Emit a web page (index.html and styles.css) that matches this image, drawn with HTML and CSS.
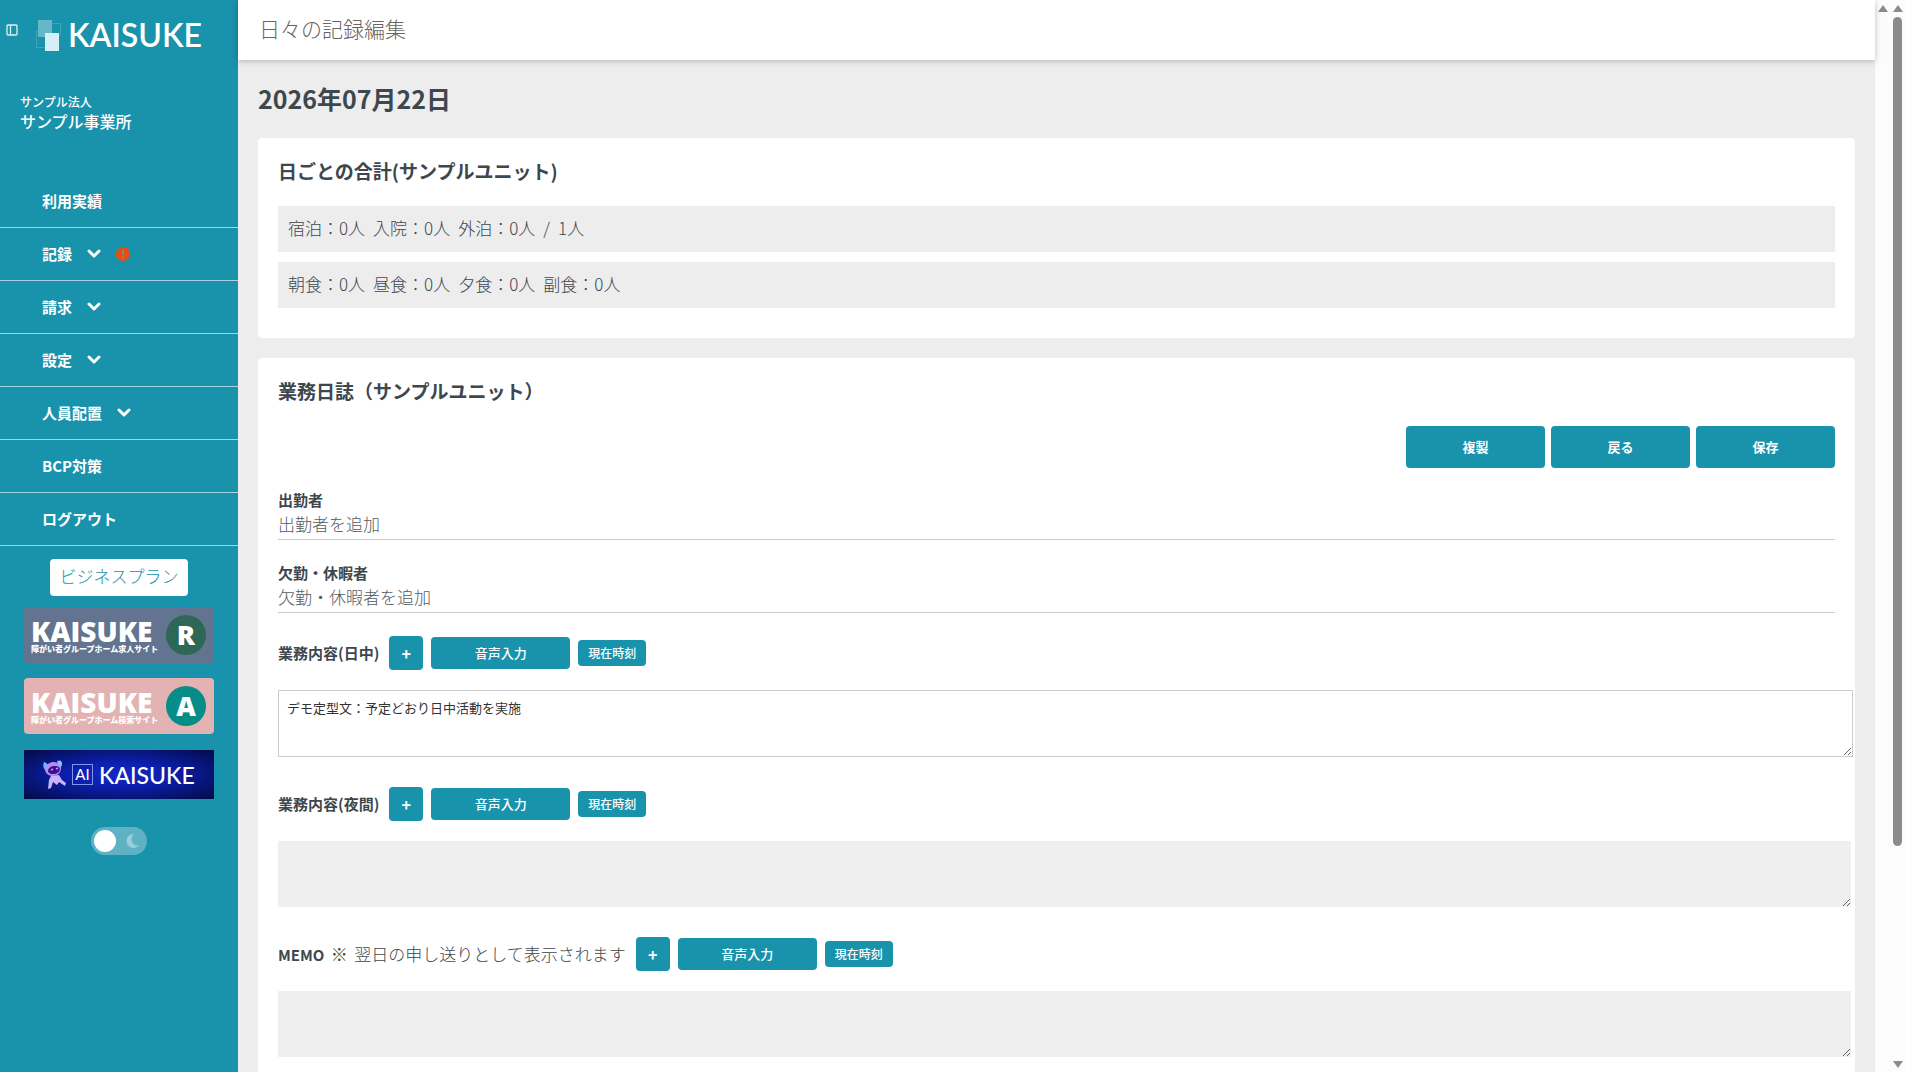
FILE: index.html
```
<!DOCTYPE html>
<html lang="ja">

<head>
<title>日々の記録編集</title>
<meta charset="utf-8">
<meta name="viewport" content="width=device-width, initial-scale=1">
<link rel="stylesheet" href="styles.css">
</head>

<body>
<div class="app">
	<aside class="sidebar">
		<div class="brand">
			<button class="collapse" type="button" aria-label="メニュー">
				<svg width="12" height="12" viewBox="0 0 12 12" fill="none" stroke="#d9f3f7" stroke-width="1.300"><rect x="1" y="1" width="10" height="10" rx="1"/><path d="M4.500 1v10"/></svg>
			</button>
			<svg class="brand-mark" width="26" height="32" viewBox="0 0 26 32">
				<rect x="14.500" y="3.500" width="10" height="12" fill="none" stroke="#3aa5bb"/>
				<rect x=".5" y="11.500" width="10" height="16" fill="none" stroke="#3aa5bb"/>
				<rect x="2" y="0" width="14" height="17" fill="#66b7c8"/>
				<rect x="9" y="13" width="14" height="18" fill="#d6eef6"/>
			</svg>
			<span class="brand-name">KAISUKE</span>
		</div>
		<div class="office">
			<p class="office-corp">サンプル法人</p>
			<p class="office-name">サンプル事業所</p>
		</div>
		<nav class="menu">
			<a href="#">利用実績</a>
			<a href="#">記録
				<svg class="chevron" width="14" height="10" viewBox="0 0 14 10"><path d="M2 2l5 5 5-5"/></svg>
				<svg class="alert" width="16" height="16" viewBox="0 0 16 16"><circle cx="8" cy="8" r="7" fill="#ea4c12"/><path d="M8 4v5M8 10.500v2" stroke="#8a8a72" stroke-width="2"/></svg>
			</a>
			<a href="#">請求
				<svg class="chevron" width="14" height="10" viewBox="0 0 14 10"><path d="M2 2l5 5 5-5"/></svg>
			</a>
			<a href="#">設定
				<svg class="chevron" width="14" height="10" viewBox="0 0 14 10"><path d="M2 2l5 5 5-5"/></svg>
			</a>
			<a href="#">人員配置
				<svg class="chevron" width="14" height="10" viewBox="0 0 14 10"><path d="M2 2l5 5 5-5"/></svg>
			</a>
			<a href="#">BCP対策</a>
			<a href="#">ログアウト</a>
		</nav>
		<div class="side-foot">
			<button class="plan" type="button">ビジネスプラン</button>
			<a class="banner banner-r" href="#">
				<span class="banner-text"><b>KAISUKE</b><small>障がい者グループホーム求人サイト</small></span>
				<span class="banner-badge">R</span>
			</a>
			<a class="banner banner-a" href="#">
				<span class="banner-text"><b>KAISUKE</b><small>障がい者グループホーム検索サイト</small></span>
				<span class="banner-badge">A</span>
			</a>
			<a class="banner-ai" href="#">
				<svg width="26" height="30" viewBox="0 0 26 30">
					<path d="M2 2Q6 3 7 8L3 10Q0 6 2 2z" fill="#62b8ff"/>
					<path d="M15 1Q20-1 20 4Q20 7 17 8z" fill="#7fc6ff"/>
					<ellipse cx="11" cy="9" rx="8" ry="7" fill="#b98cf0" transform="rotate(-12 11 9)"/>
					<ellipse cx="12" cy="10" rx="6" ry="4" fill="#35128f" transform="rotate(-12 12 10)"/>
					<path d="M9 10l2-1M14 9l2-1" stroke="#e875ff" stroke-width="1.500"/>
					<path d="M9 16L17 15L20 20L24 23L23 26L17 22L15 25L11 22L9 28L6 29L7 20z" fill="#c9b2ff"/>
				</svg>
				<span class="ai-box">AI</span>
				<span class="ai-name">KAISUKE</span>
			</a>
			<label class="theme">
				<input type="checkbox" aria-label="ダークモード">
				<svg width="14" height="16" viewBox="0 0 14 16"><path d="M8 1A7 7 0 1 0 13 12.500A6.500 6.500 0 0 1 8 1z" fill="#9ccfdb"/></svg>
			</label>
		</div>
	</aside>

	<div class="main">
		<header class="topbar">日々の記録編集</header>
		<main class="content">
			<h1>2026年07月22日</h1>

			<section class="card totals">
				<h2>日ごとの合計(サンプルユニット)</h2>
				<p><span>宿泊：0人</span> <span>入院：0人</span> <span>外泊：0人</span> <span>/</span> <span>1人</span></p>
				<p><span>朝食：0人</span> <span>昼食：0人</span> <span>夕食：0人</span> <span>副食：0人</span></p>
			</section>

			<section class="card diary">
				<h2>業務日誌（サンプルユニット）</h2>
				<div class="actions">
					<button class="btn" type="button">複製</button>
					<button class="btn" type="button">戻る</button>
					<button class="btn" type="button">保存</button>
				</div>

				<div class="field">
					<label for="present">出勤者</label>
					<input id="present" type="text" placeholder="出勤者を追加">
				</div>
				<div class="field">
					<label for="absent">欠勤・休暇者</label>
					<input id="absent" type="text" placeholder="欠勤・休暇者を追加">
				</div>

				<div class="entry">
					<div class="entry-head">
						<label for="day">業務内容(日中)</label>
						<button class="btn btn-add" type="button">+</button>
						<button class="btn btn-voice" type="button">音声入力</button>
						<button class="btn btn-time" type="button">現在時刻</button>
					</div>
					<textarea id="day" class="filled">デモ定型文：予定どおり日中活動を実施</textarea>
				</div>
				<div class="entry">
					<div class="entry-head">
						<label for="night">業務内容(夜間)</label>
						<button class="btn btn-add" type="button">+</button>
						<button class="btn btn-voice" type="button">音声入力</button>
						<button class="btn btn-time" type="button">現在時刻</button>
					</div>
					<textarea id="night"></textarea>
				</div>
				<div class="entry">
					<div class="entry-head">
						<label for="memo">MEMO <span>※</span> <span>翌日の申し送りとして表示されます</span></label>
						<button class="btn btn-add" type="button">+</button>
						<button class="btn btn-voice" type="button">音声入力</button>
						<button class="btn btn-time" type="button">現在時刻</button>
					</div>
					<textarea id="memo"></textarea>
				</div>
			</section>
		</main>
	</div>

	<div class="scroll">
		<i class="arrow-up"></i>
	</div>
	<div class="scroll">
		<i class="arrow-up"></i>
		<i class="thumb"></i>
		<i class="arrow-down"></i>
	</div>
</div>
</body>

</html>
```

FILE: styles.css
```
*,:after,:before{box-sizing:border-box}
body{
	margin:0;
	color:#3d474d;
	background:#fff;
	font:300 17px/24px 'Noto Sans CJK JP',sans-serif;
}
h1,h2,p{margin:0}
a{color:inherit;text-decoration:none}
button,input,textarea{font-family:inherit}
button{cursor:pointer}

.app{
	display:flex;
	height:100vh;
	padding:0 15px 8px 0;
	overflow:hidden;
}

/* sidebar */
.sidebar{
	flex:none;
	width:238px;
	color:#fff;
	background:#1992ac;
}
.brand{
	display:flex;
	height:90px;
	padding:20px 0 0 6px;
}
.collapse{
	width:12px;
	height:20px;
	margin-right:18px;
	padding:0;
	border:0;
	background:none;
}
.brand-name{
	margin-left:6px;
	font:600 32px/30px Lato,sans-serif;
}
.office{
	height:85px;
	padding-left:20px;
	font-weight:500;
}
.office-corp{
	font-size:12px;
}
.office-name{
	font-size:16px;
	line-height:14px;
}
.menu a{
	display:flex;
	align-items:center;
	height:53px;
	padding-left:42px;
	border-bottom:1px solid #a3d3de;
	font-size:15px;
	font-weight:700;
}
.chevron{
	margin-left:15px;
	fill:none;
	stroke:#fff;
	stroke-width:3;
	stroke-linecap:round;
	stroke-linejoin:round;
}
.alert{
	margin-left:14px;
}
.side-foot{
	display:flex;
	flex-direction:column;
	align-items:center;
	padding-top:13px;
}
.plan{
	width:138px;
	height:37px;
	padding:0 0 4px;
	border:0;
	border-radius:4px;
	color:#1992ac;
	background:#fff;
	font-size:17px;
	font-weight:300;
}
.banner{
	display:flex;
	align-items:center;
	justify-content:space-between;
	width:190px;
	height:56px;
	margin-top:11px;
	padding:0 8px 0 7px;
	border-radius:4px;
}
.banner-r{background:#62748f}
.banner-a{background:#e3b3b4;margin-top:15px}
.banner-text b{
	display:block;
	font:800 28px/28px 'Open Sans',sans-serif;
}
.banner-text small{
	display:block;
	font-size:8px;
	font-weight:900;
	line-height:8px;
}
.banner-badge{
	width:40px;
	height:40px;
	border-radius:50%;
	background:#2f6757;
	font:800 27px/40px 'Open Sans',sans-serif;
	text-align:center;
}
.banner-a .banner-badge{background:#078d88}
.banner-ai{
	display:flex;
	align-items:center;
	width:190px;
	height:49px;
	margin-top:16px;
	padding-left:18px;
	background:radial-gradient(ellipse at center,#1429c8 0,#0b1ea8 40%,#030b45 100%);
}
.ai-box{
	width:21px;
	height:21px;
	margin:0 6px 0 4px;
	border:1px solid #8296e8;
	font:400 15px/19px Lato,sans-serif;
	text-align:center;
}
.ai-name{
	font:500 23px/24px Lato,sans-serif;
}
.theme{
	display:flex;
	align-items:center;
	gap:10px;
	width:56px;
	height:28px;
	margin-top:28px;
	padding-left:3px;
	border-radius:14px;
	background:#5fb2c4;
}
.theme input{
	appearance:none;
	width:22px;
	height:22px;
	margin:0;
	border-radius:50%;
	background:#fff;
}

/* main */
.main{
	display:flex;
	flex:1;
	flex-direction:column;
	min-width:0;
	background:#ededed;
}
.topbar{
	position:relative;
	flex:none;
	height:60px;
	padding-left:21px;
	background:#fff;
	box-shadow:0 1px 6px rgba(0,0,0,.25);
	color:#666;
	font-size:21px;
	line-height:56px;
}
.content{
	padding:20px;
}
h1{
	font-size:25px;
	font-weight:700;
	line-height:36px;
}
.card{
	margin-top:20px;
	padding:20px;
	border-radius:4px;
	background:#fff;
}
h1 + .card{
	margin-top:22px;
}
h2{
	font-size:19px;
	font-weight:700;
	line-height:26px;
}
.totals{
	height:200px;
}
.totals p{
	display:flex;
	gap:8px;
	height:46px;
	margin-top:10px;
	padding:0 10px;
	background:#ededed;
	line-height:43px;
}
.totals h2 + p{
	margin-top:22px;
}
.actions{
	display:flex;
	justify-content:flex-end;
	gap:6px;
	margin:22px 0 20px;
}
.btn{
	width:139px;
	height:42px;
	padding:0 0 1px;
	border:0;
	border-radius:4px;
	color:#fff;
	background:#1992ac;
	font-size:13px;
	font-weight:700;
}
.field{
	margin-bottom:21px;
}
.field label{
	display:block;
	font-size:15px;
	font-weight:700;
	line-height:24px;
}
.field input{
	display:block;
	width:100%;
	height:28px;
	padding:0 0 4px;
	border:0;
	border-bottom:1px solid #c9c9c9;
	background:none;
	font-size:17px;
	font-weight:300;
	outline:0;
}
.field input::placeholder{
	color:#555d62;
}
.entry{
	margin-bottom:30px;
}
.entry-head{
	display:flex;
	align-items:center;
	gap:8px;
	height:34px;
	margin:0 0 20px;
}
.field + .entry{
	padding-top:2px;
}
.entry-head label{
	margin-right:2px;
	font-size:15px;
	font-weight:700;
}
.entry-head label span{
	margin-left:3px;
	font-size:17px;
	font-weight:300;
}
.btn-add{
	width:34px;
	height:34px;
	font-size:16px;
}
.btn-voice{
	height:32px;
	font-weight:500;
}
.btn-time{
	width:68px;
	height:26px;
	font-size:12px;
	font-weight:500;
}
.entry textarea{
	display:block;
	width:calc(100% + 16px);
	height:66px;
	padding:7px 8px;
	border:0;
	background:#efefef;
	color:#333;
	font-size:13px;
	font-weight:400;
	line-height:20px;
}
.entry textarea.filled{
	width:calc(100% + 18px);
	height:67px;
	border:1px solid #ccc;
	background:#fff;
}

/* scroll bars */
.scroll{
	display:flex;
	flex:none;
	flex-direction:column;
	align-items:center;
	gap:5px;
	width:15px;
	padding:5px 0 4px;
	background:#fcfcfc;
}
.arrow-up,
.arrow-down{
	border:5px solid transparent;
}
.arrow-up{
	border-top:0;
	border-bottom:7px solid #8b8b8b;
}
.arrow-down{
	margin-top:auto;
	border-bottom:0;
	border-top:7px solid #8b8b8b;
}
.thumb{
	width:9px;
	height:78%;
	border-radius:5px;
	background:#8b8b8b;
}
```
